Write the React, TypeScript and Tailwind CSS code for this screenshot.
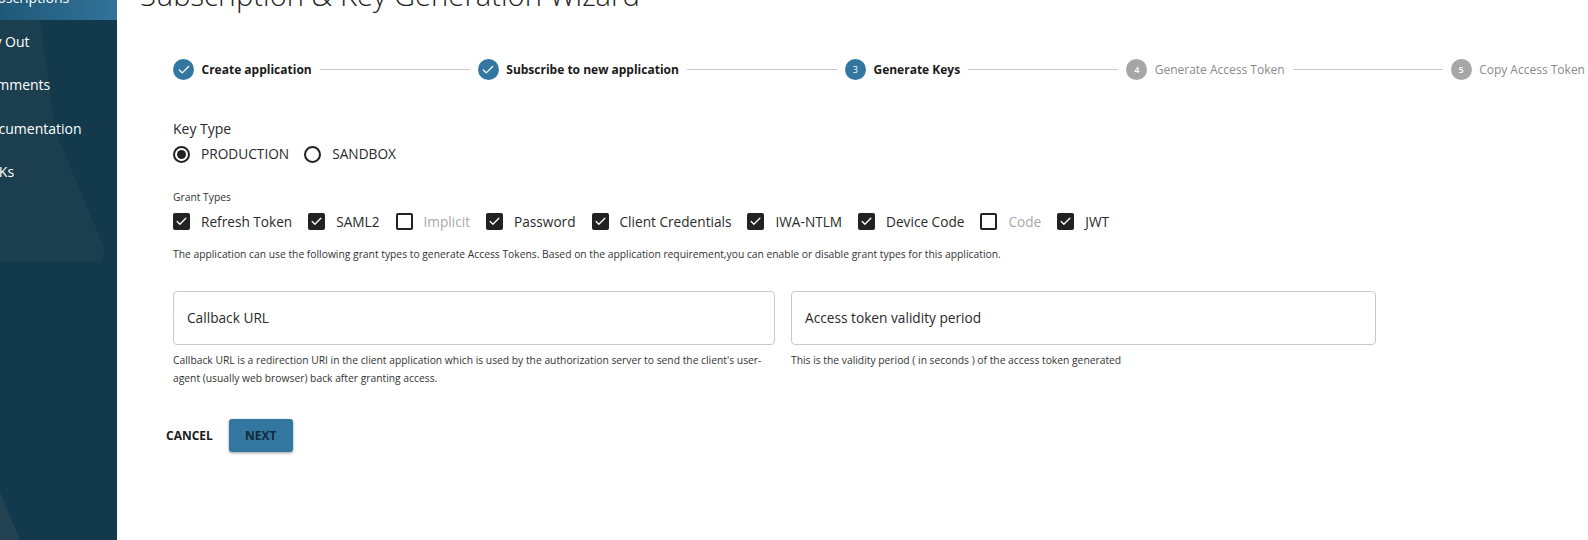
import { Check } from 'lucide-react';

const navItems = [
  { label: 'Subscriptions', offset: 'ml-[-19px]', active: true },
  { label: 'Try Out', offset: 'ml-[-19px]' },
  { label: 'Comments', offset: 'ml-[-21px]' },
  { label: 'Documentation', offset: 'ml-[-20px]' },
  { label: 'SDKs', offset: 'ml-[-19px]' },
];

const grantTypes = [
  { label: 'Refresh Token', checked: true },
  { label: 'SAML2', checked: true },
  { label: 'Implicit', checked: false },
  { label: 'Password', checked: true },
  { label: 'Client Credentials', checked: true },
  { label: 'IWA-NTLM', checked: true },
  { label: 'Device Code', checked: true },
  { label: 'Code', checked: false },
  { label: 'JWT', checked: true },
];

function Step({ n, label, state }: { n: number; label: string; state: 'done' | 'active' | 'todo' }) {
  return (
    <div className="flex items-center shrink-0">
      <div className={state === 'todo' ? 'w-[21px] h-[21px] rounded-full bg-[#a6a6a6] text-white text-[9px] font-semibold flex items-center justify-center' : 'w-[21px] h-[21px] rounded-full bg-[#33769f] text-white text-[9px] flex items-center justify-center'}>
        {state === 'done' ? <Check size={14} strokeWidth={2.2} /> : n}
      </div>
      <span className={state === 'todo' ? 'ml-[7.5px] text-[12px] text-[#8a8a8a]' : 'ml-[7.5px] text-[12px] font-bold text-[#1a1a1a]'}>{label}</span>
    </div>
  );
}

function Connector() {
  return <div className="flex-1 h-px bg-[#c8c8c8] mx-2" />;
}

function Radio({ label, checked }: { label: string; checked?: boolean }) {
  return (
    <label className="flex items-center">
      <span className="w-[17px] h-[17px] rounded-full border-2 border-[#222] flex items-center justify-center">
        {checked && <span className="w-[9px] h-[9px] rounded-full bg-[#222]" />}
      </span>
      <span className="ml-[11px] text-[13.7px] text-[#2a2a2a]">{label}</span>
    </label>
  );
}

function GrantBox({ label, checked }: { label: string; checked: boolean }) {
  return (
    <label className="flex items-center">
      {checked ? (
        <span className="w-[17px] h-[17px] rounded-[2px] bg-[#222] flex items-center justify-center text-white">
          <Check size={13} strokeWidth={2.4} />
        </span>
      ) : (
        <span className="w-[17px] h-[17px] rounded-[2px] border-2 border-[#222]" />
      )}
      <span className={checked ? 'ml-[11px] text-[13.65px] text-[#2a2a2a]' : 'ml-[11px] text-[13.65px] text-[#a8a8a8]'}>{label}</span>
    </label>
  );
}

export default function App() {
  return (
    <div className="w-[1588px] h-[540px] overflow-hidden flex bg-white font-['Open_Sans',sans-serif]">
      <aside className="relative w-[117px] shrink-0 bg-[#123a4c] overflow-hidden">
        <svg className="absolute inset-0 w-full h-full" viewBox="0 0 117 540" preserveAspectRatio="none">
          <polygon points="0,20 40,20 55,130 105,250 100,262 0,262" fill="#2a4656" opacity="0.45" />
          <polygon points="0,492 20,540 0,540" fill="#2a4656" opacity="0.7" />
        </svg>
        <nav className="relative">
          {navItems.map((item) => (
            <div
              key={item.label}
              className={item.active ? 'h-[20px] flex items-end pb-[12px] bg-gradient-to-r from-[#1f5877] to-[#33739a] text-white text-[14px] whitespace-nowrap' : 'h-[43.3px] flex items-center text-white text-[14px] whitespace-nowrap'}
            >
              <span className={item.offset}>{item.label}</span>
            </div>
          ))}
        </nav>
      </aside>

      <main className="flex-1 min-w-0 pl-[56px]">
        <h1 className="mt-[-25px] ml-[-33px] text-[29.2px] leading-[40px] font-light text-[#222] whitespace-nowrap">Subscription &amp; Key Generation Wizard</h1>

        <div className="mt-[44px] flex items-center w-[1412px]">
          <Step n={1} label="Create application" state="done" />
          <Connector />
          <Step n={2} label="Subscribe to new application" state="done" />
          <Connector />
          <Step n={3} label="Generate Keys" state="active" />
          <Connector />
          <Step n={4} label="Generate Access Token" state="todo" />
          <Connector />
          <Step n={5} label="Copy Access Token" state="todo" />
        </div>

        <div className="mt-[39px] text-[14px] leading-[20px] text-[#2a2a2a]">Key Type</div>
        <div className="mt-[5px] flex gap-[15px]">
          <Radio label="PRODUCTION" checked />
          <Radio label="SANDBOX" />
        </div>

        <div className="mt-[25px] text-[10.3px] leading-[14px] text-[#333]">Grant Types</div>
        <div className="mt-[8px] flex gap-[16px]">
          {grantTypes.map((g) => (
            <GrantBox key={g.label} label={g.label} checked={g.checked} />
          ))}
        </div>
        <p className="mt-[14px] text-[10.3px] leading-[16px] text-[#333]">The application can use the following grant types to generate Access Tokens. Based on the application requirement,you can enable or disable grant types for this application.</p>

        <div className="mt-[29px] flex gap-[16px] w-[1203px]">
          <div className="w-[602px] shrink-0">
            <div className="h-[54px] border border-[#c9c9c9] rounded-[4px] px-[13px] flex items-center text-[13.7px] text-[#2a2a2a]">Callback URL</div>
            <p className="mt-[7px] text-[10.3px] leading-[17.5px] text-[#333]">Callback URL is a redirection URI in the client application which is used by the authorization server to send the client's user-agent (usually web browser) back after granting access.</p>
          </div>
          <div className="flex-1">
            <div className="h-[54px] border border-[#c9c9c9] rounded-[4px] px-[13px] flex items-center text-[13.7px] text-[#2a2a2a]">Access token validity period</div>
            <p className="mt-[7px] text-[10.3px] leading-[17.5px] text-[#333]">This is the validity period ( in seconds ) of the access token generated</p>
          </div>
        </div>

        <div className="mt-[32px] ml-[-7px] flex items-center gap-[16px]">
          <button type="button" className="text-[12px] font-bold text-[#1a1a1a]">CANCEL</button>
          <button type="button" className="w-[64px] h-[33px] rounded-[3px] bg-[#33769f] text-[12px] font-bold text-[#14293a] shadow-[0_1px_3px_rgba(0,0,0,0.4)]">NEXT</button>
        </div>
      </main>
    </div>
  );
}
